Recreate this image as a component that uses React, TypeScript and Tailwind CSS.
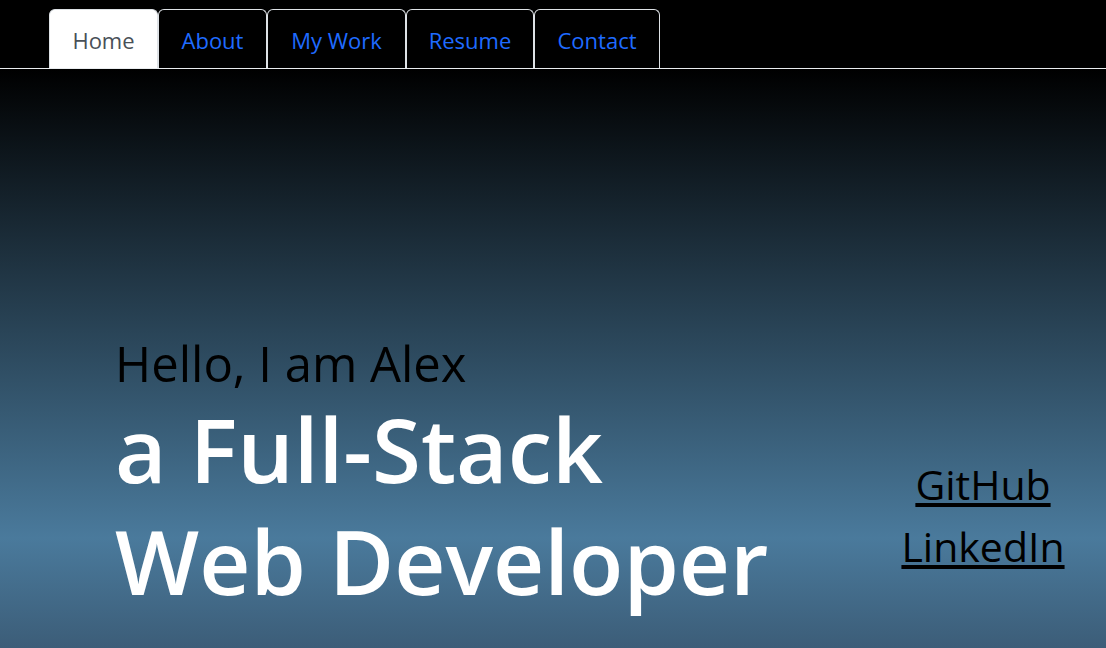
import React from "react";

const tabs = [
  { label: "Home", w: "w-[109px]", active: true },
  { label: "About", w: "w-[109px]", active: false },
  { label: "My Work", w: "w-[139px]", active: false },
  { label: "Resume", w: "w-[128px]", active: false },
  { label: "Contact", w: "w-[126px]", active: false },
];

export default function App() {
  return (
    <div
      className="h-[648px] w-full flex flex-col bg-black overflow-hidden"
      style={{ fontFamily: '"Open Sans", "Noto Sans", sans-serif' }}
    >
      <nav className="h-[69px] shrink-0 border-b border-[#e9ecef] pl-[49px] pt-[9px] flex">
        {tabs.map((t) => (
          <a
            key={t.label}
            href="#"
            className={
              (t.active
                ? "bg-white text-[#495057] "
                : "bg-black text-[#1f6bff] ") +
              t.w +
              " h-[59px] pt-[3px] flex items-center justify-center text-[22px] border-t border-x border-[#dee2e6] rounded-t-[6px]"
            }
          >
            {t.label}
          </a>
        ))}
      </nav>
      <main className="flex-1 flex justify-between bg-[linear-gradient(to_bottom,#000_0%,#4a7a9c_81%,#3c5d78_100%)]">
        <div className="pl-[115px] pt-[266px]">
          <h2 className="text-[49px] leading-[56px] mb-[2px] text-black">Hello, I am Alex</h2>
          <h1 className="text-[89px] leading-[112px] font-semibold text-white">
            a Full-Stack
            <br />
            Web Developer
          </h1>
        </div>
        <div className="w-[200px] mr-[23px] pt-[384px] flex flex-col items-center">
          <a href="#" className="text-[41px] leading-[62px] text-black underline">
            GitHub
          </a>
          <a href="#" className="text-[41px] leading-[62px] text-black underline">
            LinkedIn
          </a>
        </div>
      </main>
    </div>
  );
}
